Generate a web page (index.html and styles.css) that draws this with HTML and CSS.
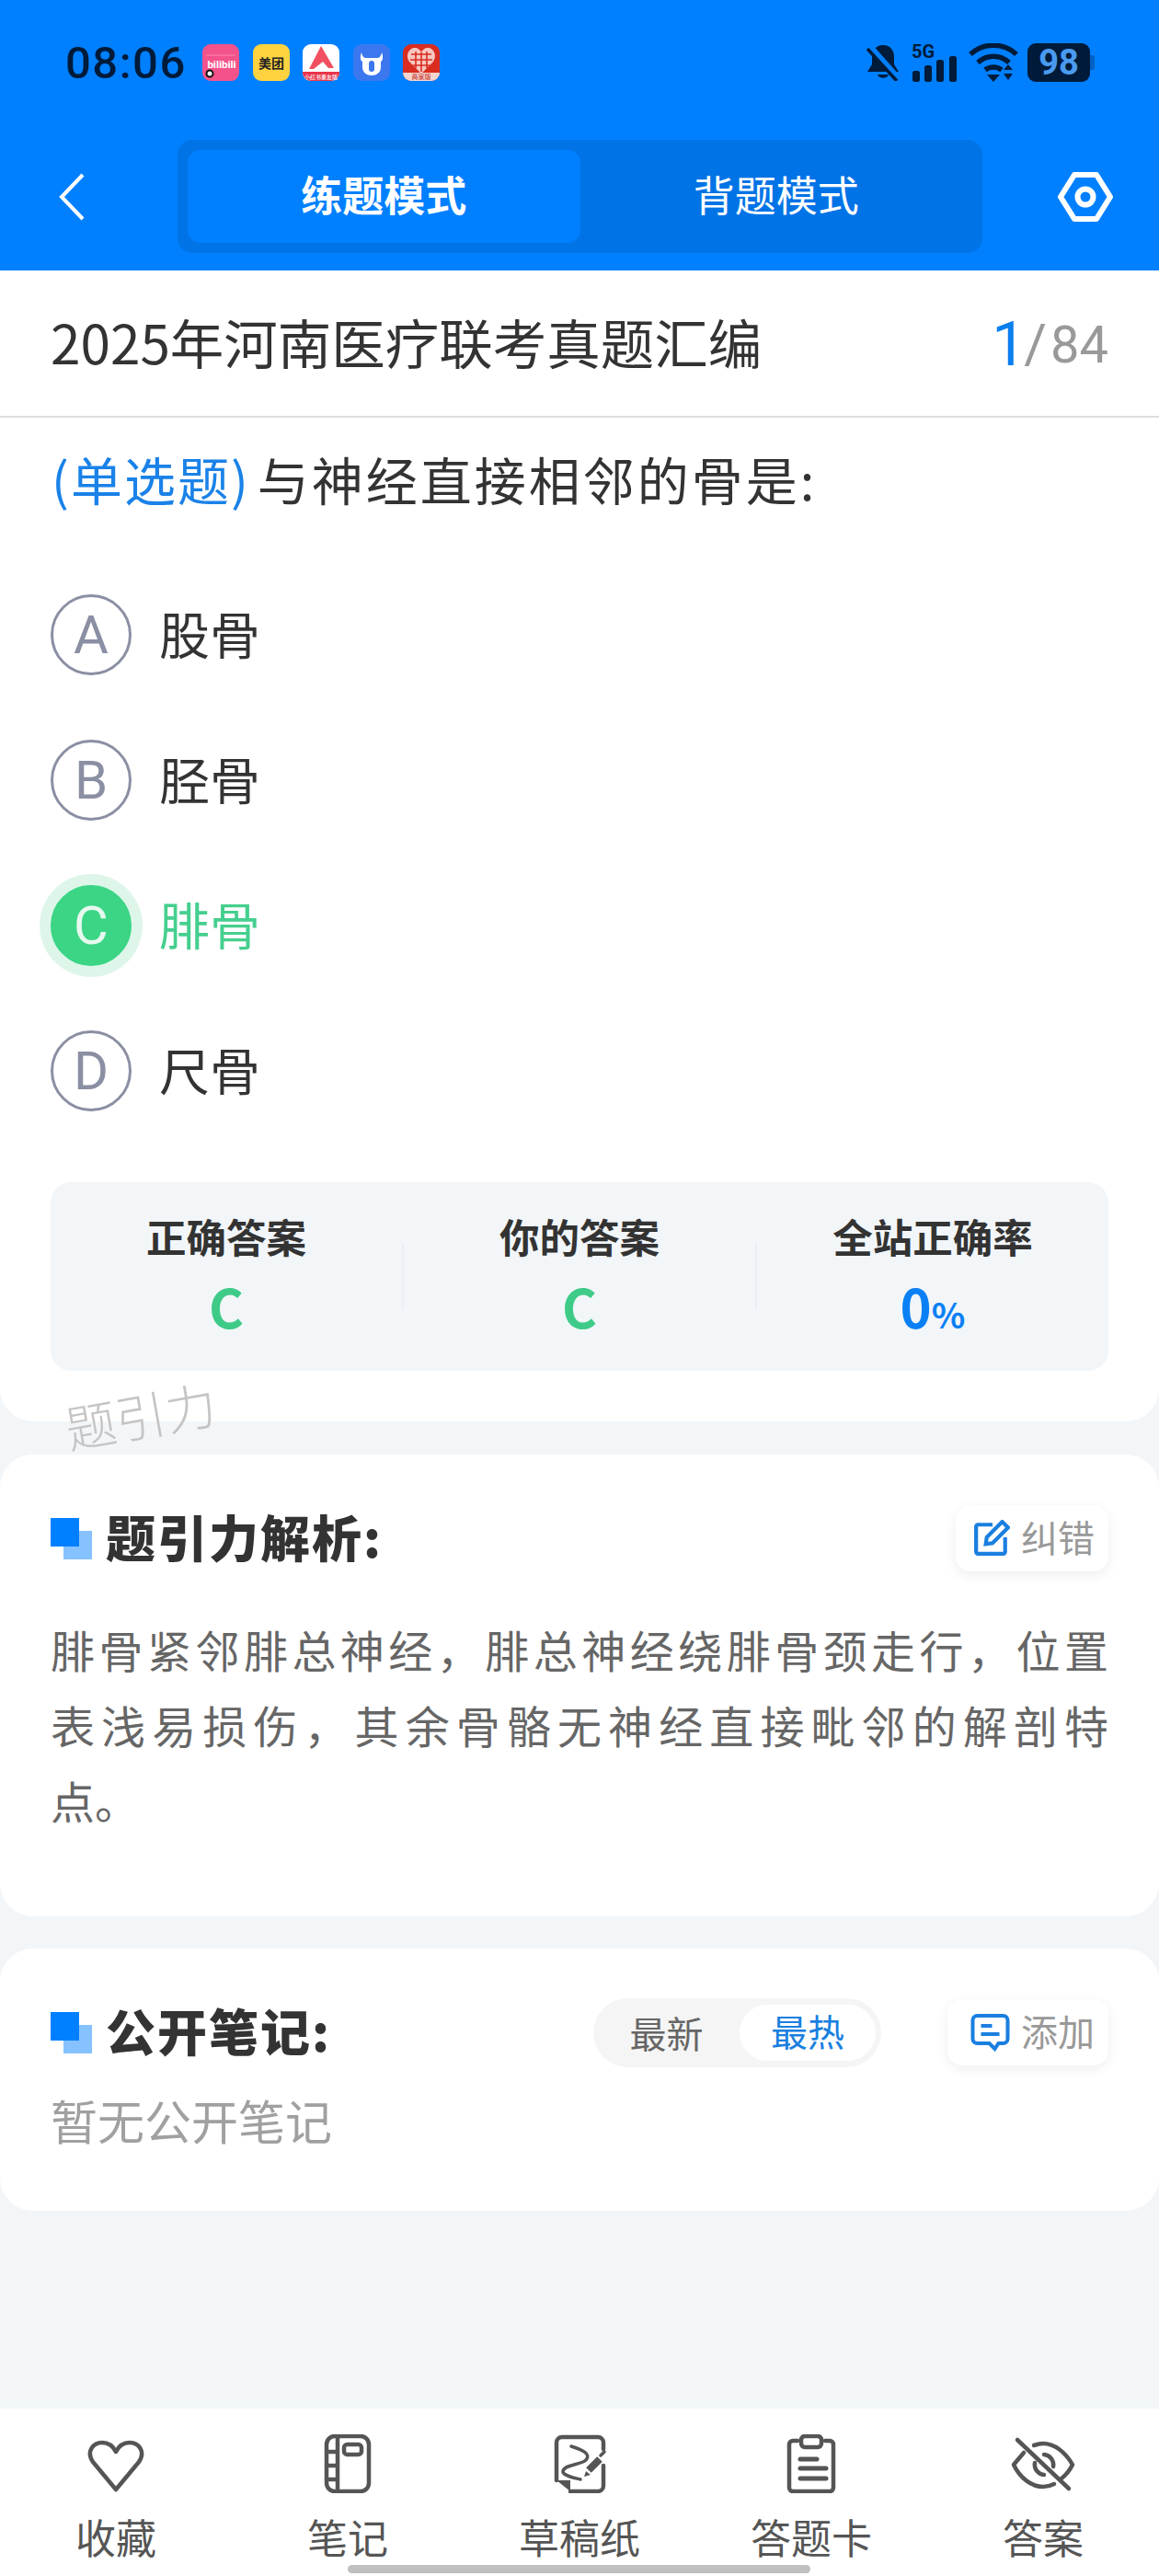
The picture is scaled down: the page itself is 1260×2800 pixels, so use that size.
FILE: index.html
```html
<!DOCTYPE html>
<html lang="zh-CN">
<head>
<meta charset="utf-8">
<title>练题模式</title>
<link rel="stylesheet" href="styles.css">
</head>
<body>
<div class="page">
  <header class="header">
    <div class="status">
      <span class="time">08:06</span>
      <div class="apps">
        <svg class="app" viewBox="0 0 40 40"><rect width="40" height="40" rx="9" fill="#f4528a"/><path d="M4 12 H36" stroke="#f98ab0" stroke-width="1"/><text x="21" y="26" class="app-bili">bilibili</text><circle cx="8" cy="32" r="3.5" fill="#fff" stroke="#111" stroke-width="2"/></svg>
        <svg class="app" viewBox="0 0 40 40"><rect width="40" height="40" rx="9" fill="#ffd23f"/><text x="20" y="26" class="app-mt">美团</text></svg>
        <svg class="app" viewBox="0 0 40 40"><rect width="40" height="40" rx="9" fill="#fff"/><path d="M0 30H40V31a9 9 0 0 1-9 9H9a9 9 0 0 1-9-9Z" fill="#e8344a"/><path d="M20 2 L34 26 H28 L22 19 L12 27 H7 Z" fill="#f0505f"/><text x="20" y="38" class="app-tiny">小红书素友版</text></svg>
        <svg class="app" viewBox="0 0 40 40"><rect width="40" height="40" rx="9" fill="#3b78f0"/><path d="M9 9 C10 14 12 15 14 15 H26 C28 15 30 14 31 9 C33 14 32 18 30 19 V25 C30 37 10 37 10 25 V19 C8 18 7 14 9 9 Z" fill="#fff"/><rect x="17" y="18" width="6" height="12" rx="3" fill="#3b78f0"/></svg>
        <svg class="app" viewBox="0 0 40 40"><rect width="40" height="40" rx="9" fill="#d92d20"/><path d="M20 32 L7 19 C2 12 7 4 13 4 C16 4 19 6 20 9 C21 6 24 4 27 4 C33 4 38 12 33 19 Z" fill="#f7c7c0"/><path d="M20 9V30M9 11H31M8 17H32M11 23H29M14 8V26M26 8V26" stroke="#d92d20" stroke-width="1.6"/><path d="M0 31H40V31a9 9 0 0 1-9 9H9a9 9 0 0 1-9-9Z" fill="#f4d5cf"/><text x="20" y="38" class="app-tiny app-red">商家版</text></svg>
      </div>
      <div class="sys">
        <svg class="ic-bell" viewBox="0 0 38 40"><path d="M19 1 C11 1 7 7 7 14 V22 L2 30 H36 L31 22 V14 C31 7 27 1 19 1 Z" fill="#001b3a"/><path d="M13 33 H25 C24 38 14 38 13 33 Z" fill="#001b3a"/><path d="M4 2 L36 38" stroke="#0080ff" stroke-width="7"/><path d="M2 5 L34 40" stroke="#001b3a" stroke-width="3.5"/></svg>
        <svg class="ic-signal" viewBox="0 -8 50 50"><text x="0" y="16" class="five-g">5G</text><rect x="1" y="30" width="8" height="12" rx="2.5"/><rect x="14" y="24" width="8" height="18" rx="2.5"/><rect x="27" y="18" width="8" height="24" rx="2.5"/><rect x="41" y="14" width="8" height="28" rx="2.5"/></svg>
        <svg class="ic-wifi" viewBox="0 0 54 42"><path d="M2 12 C16 -1 38 -1 52 12" class="wave"/><path d="M10 21 C20 12 34 12 44 21" class="wave"/><path d="M18 29 C23 25 31 25 36 29" class="wave"/><path d="M20 34 H34 L27 42 Z" class="solid"/><path d="M43 23 L48 29 H38 Z M38 33 H48 L43 40 Z" class="solid"/></svg>
        <div class="battery"><span class="batt-body">98</span><span class="batt-nub"></span></div>
      </div>
    </div>
    <nav class="nav">
      <svg class="back" viewBox="0 0 28 52"><path d="M26 2 L3 26 L26 50"/></svg>
      <div class="tabs">
        <div class="tab tab-on">练题模式</div>
        <div class="tab">背题模式</div>
      </div>
      <svg class="gear" viewBox="0 0 60 54"><path d="M18 3 H42 L57 27 L42 51 H18 L3 27 Z"/><circle cx="30" cy="27" r="8.5"/></svg>
    </nav>
  </header>

  <section class="card card-q">
    <div class="q-head">
      <h1 class="q-title">2025年河南医疗联考真题汇编</h1>
      <div class="q-count"><span class="cnt-now">1</span><span class="cnt-sep">/</span><span class="cnt-all">84</span></div>
    </div>
    <p class="q-text"><span class="q-type">(单选题)</span><span class="q-body">与神经直接相邻的骨是:</span></p>
    <ul class="opts">
      <li class="opt"><span class="dot">A</span><span class="opt-txt">股骨</span></li>
      <li class="opt"><span class="dot">B</span><span class="opt-txt">胫骨</span></li>
      <li class="opt opt-on"><span class="dot">C</span><span class="opt-txt">腓骨</span></li>
      <li class="opt"><span class="dot">D</span><span class="opt-txt">尺骨</span></li>
    </ul>
    <div class="stats">
      <div class="stat"><div class="stat-label">正确答案</div><div class="stat-val green">C</div></div>
      <div class="stat-div"></div>
      <div class="stat"><div class="stat-label">你的答案</div><div class="stat-val green">C</div></div>
      <div class="stat-div"></div>
      <div class="stat"><div class="stat-label">全站正确率</div><div class="stat-val blue">0<small>%</small></div></div>
    </div>
    <div class="mark">题引力</div>
  </section>

  <section class="card card-a">
    <div class="sec-head">
      <i class="sec-blk"></i><h2 class="sec-title">题引力解析:</h2>
      <div class="pill-btn">
        <svg class="pill-ic" viewBox="0 0 38 38"><path d="M20 5 H5 A2 2 0 0 0 3 7 V33 A2 2 0 0 0 5 35 H31 A2 2 0 0 0 33 33 V18"/><path d="M13 25 L14 18 L30 2 L36 8 L20 24 Z"/></svg>
        <span class="pill-txt">纠错</span>
      </div>
    </div>
    <div class="para">
      <div class="ln">腓骨紧邻腓总神经，腓总神经绕腓骨颈走行，位置</div>
      <div class="ln">表浅易损伤，其余骨骼无神经直接毗邻的解剖特</div>
      <div class="ln ln-last">点。</div>
    </div>
  </section>

  <section class="card card-n">
    <div class="sec-head">
      <i class="sec-blk"></i><h2 class="sec-title">公开笔记:</h2>
      <div class="seg"><span class="seg-item">最新</span><span class="seg-item seg-on">最热</span></div>
      <div class="pill-btn pill-add">
        <svg class="pill-ic pill-ic-add" viewBox="0 0 44 42"><path d="M8 3 H36 A5 5 0 0 1 41 8 V28 A5 5 0 0 1 36 33 H31 L27 39 L21 33 H8 A5 5 0 0 1 3 28 V8 A5 5 0 0 1 8 3 Z"/><path d="M12 14 H24 M12 23 H32"/></svg>
        <span class="pill-txt">添加</span>
      </div>
    </div>
    <p class="empty">暂无公开笔记</p>
  </section>

  <div class="spacer"></div>

  <footer class="bar">
    <div class="bar-item">
      <svg class="b-ic" width="64" height="64" viewBox="0 0 64 64"><path d="M32 60 L7 30 C-1 18 8 9 17 9 C24 9 29 13 32 19 C35 13 40 9 47 9 C56 9 65 18 57 30 Z"/></svg>
      <span>收藏</span>
    </div>
    <div class="bar-item">
      <svg class="b-ic" width="64" height="64" viewBox="0 0 64 64"><rect x="9" y="2" width="46" height="60" rx="9"/><path d="M21 2 V62 M9 19 H21 M9 34 H21 M9 49 H21"/><rect x="28" y="11" width="19" height="11" rx="3.5"/></svg>
      <span>笔记</span>
    </div>
    <div class="bar-item">
      <svg class="b-ic" width="64" height="64" viewBox="0 0 64 64"><path d="M7 50 V9 A6 6 0 0 1 13 3 H52 A6 6 0 0 1 58 9 V16 M58 34 V56 A6 6 0 0 1 52 62 H22"/><path d="M7 50 H22 V62 Z" class="b-fill"/><path d="M23 13 C35 17 45 21 39 28 C35 33 13 33 14 41 C15 45 25 47 33 49" class="b-thin"/><path d="M42 39 L54 27" class="b-thick"/><path d="M37 46 L44 44 L39 40 Z" class="b-fill"/><path d="M55 23 L59 19" class="b-thin"/></svg>
      <span>草稿纸</span>
    </div>
    <div class="bar-item">
      <svg class="b-ic" width="64" height="64" viewBox="0 0 64 64"><path d="M17 7 H12 A4 4 0 0 0 8 11 V58 A4 4 0 0 0 12 62 H52 A4 4 0 0 0 56 58 V11 A4 4 0 0 0 52 7 H47"/><rect x="21" y="2" width="22" height="12" rx="4"/><path d="M20 27 H38 M20 37 H48 M20 48 H48" class="b-thick2"/></svg>
      <span>答题卡</span>
    </div>
    <div class="bar-item">
      <svg class="b-ic" width="70" height="64" viewBox="0 0 70 64"><path d="M14 20 L3 33 C10 48 23 57 35 57 C39 57 43 56 47 54 M25 12 C28 11 31 10 35 10 C47 10 59 19 67 33 C64 39 60 44 55 48"/><path d="M26 31 A11 11 0 0 0 36 44 M36 22 A11 11 0 0 1 46 35"/><path d="M7 6 L63 59"/></svg>
      <span>答案</span>
    </div>
  </footer>
  <div class="home"></div>
</div>
</body>
</html>
```
FILE: styles.css
```css
* { box-sizing: border-box; margin: 0; padding: 0; }
html, body { background: #f2f6f9; }
body { font-family: "Noto Sans CJK SC", "Noto Sans", sans-serif; color: #333; }
.page { position: relative; width: 1260px; height: 2800px; display: flex; flex-direction: column; overflow: hidden; }

/* header */
.header { height: 294px; background: #0080ff; flex: none; }
.status { height: 136px; padding: 0 70px 0 71px; display: flex; align-items: center; color: #001b3a; }
.time { font-family: "Roboto", sans-serif; font-weight: 500; font-size: 49px; letter-spacing: 1.5px; width: 149px; }
.apps { display: flex; gap: 14.5px; }
.app { width: 40px; height: 40px; display: block; }
.app-bili { font: 700 11.5px "Roboto", sans-serif; fill: #fff; text-anchor: middle; }
.app-mt { font: 700 14px "Noto Sans CJK SC", sans-serif; fill: #222; text-anchor: middle; }
.app-tiny { font: 500 6px "Noto Sans CJK SC", sans-serif; fill: #fff; text-anchor: middle; }
.app-red { fill: #c93a30; font-size: 7px; }
.sys { margin-left: auto; display: flex; align-items: center; }
.ic-bell { width: 38px; height: 40px; margin-right: 12px; }
.ic-signal { width: 50px; height: 50px; margin: -8px 12px 0 0; fill: #001b3a; }
.five-g { font: 700 20px "Roboto", sans-serif; fill: #001b3a; }
.ic-wifi { width: 54px; height: 42px; margin-right: 10px; }
.wave { fill: none; stroke: #001b3a; stroke-width: 5.5; }
.solid { fill: #001b3a; }
.battery { display: flex; align-items: center; }
.batt-body { width: 68px; height: 42px; border-radius: 9px; background: #001b3a; color: #4a9bf0; font: 700 38px/42px "Roboto", sans-serif; text-align: center; }
.batt-nub { width: 5px; height: 16px; background: #0061c4; border-radius: 0 3px 3px 0; }

.nav { height: 155px; display: flex; align-items: center; padding-left: 64px; }
.back { width: 28px; height: 52px; margin-right: 101px; fill: none; stroke: #fff; stroke-width: 4; }
.tabs { width: 875px; height: 123px; padding: 11px; background: #0073e6; border-radius: 16px; display: flex; }
.tab { flex: 1; display: flex; align-items: center; justify-content: center; padding-bottom: 7px; font-size: 45px; color: #fff; border-radius: 14px; }
.tab-on { background: #0080ff; font-weight: 700; }
.gear { width: 60px; height: 54px; margin-left: 82px; fill: none; stroke: #fff; stroke-width: 6; stroke-linejoin: round; }

/* cards */
.card { background: #fff; flex: none; padding: 0 55px; }
.card-q { position: relative; height: 1251px; padding-bottom: 55px; border-radius: 0 0 36px 36px; }
.card-a { margin-top: 36px; height: 502px; padding-top: 55px; border-radius: 36px; }
.card-n { margin-top: 35px; height: 285px; padding-top: 55px; border-radius: 36px; }

.q-head { height: 160px; margin: 0 -55px; padding: 0 55px; display: flex; align-items: center; justify-content: space-between; border-bottom: 2px solid #dedede; }
.q-title { font-size: 58.5px; font-weight: 400; color: #333; margin-bottom: 5px; }
.q-count { display: flex; align-items: baseline; font-family: "Roboto", sans-serif; color: #999; margin-bottom: 3px; }
.cnt-now { font-size: 66px; color: #0a7fef; transform: translateY(3px); }
.cnt-sep { font-size: 60px; margin: 0 4px 0 -2px; }
.cnt-all { font-size: 56px; }

.q-text { font-size: 56px; line-height: 70px; letter-spacing: 3px; margin-top: 31px; padding-left: 1px; color: #333; display: flex; }
.q-type { color: #1a82e8; letter-spacing: 2px; }
.q-body { margin-left: 8px; }

.opts { list-style: none; margin-top: 91px; display: flex; flex-direction: column; gap: 70px; }
.opt { display: flex; align-items: center; gap: 30px; height: 88px; font-size: 55px; color: #333; }
.opt-txt { margin-top: -7px; }
.dot { width: 88px; height: 88px; border-radius: 50%; border: 3px solid #8b8fa3; color: #8b8fa3; display: flex; align-items: center; justify-content: center; font: 400 58px "Roboto", sans-serif; }
.opt-on { color: #45cf8e; }
.opt-on .dot { background: #3bd585; border-color: #3bd585; color: #e6f9ef; box-shadow: 0 0 0 12px #def6ea; }

.stats { margin-top: 77px; height: 205px; border-radius: 22px; background: #f2f6f9; display: flex; align-items: center; }
.stat { flex: 1; height: 100%; padding-top: 28px; text-align: center; }
.stat-label { font-size: 43.5px; font-weight: 700; line-height: 62px; color: #333; }
.stat-val { font-size: 58px; font-weight: 700; line-height: 70px; margin-top: 9px; }
.stat-val small { font-size: 38px; font-weight: 700; }
.green { color: #3ecb88; }
.blue { color: #0a80f5; }
.stat-div { width: 2px; height: 73px; background: #ebeef2; }

.mark { position: absolute; left: 70px; top: 1207px; font-size: 55px; line-height: 72px; font-weight: 300; color: #c4c4c4; transform: rotate(-10deg); }

.sec-head { display: flex; align-items: center; height: 72px; }
.sec-blk { width: 31px; height: 31px; background: #0080ff; box-shadow: 14px 14px 0 #86c2ff; margin: 0 29px 14px 0; flex: none; }
.sec-title { font-size: 54px; font-weight: 900; color: #333; letter-spacing: 2px; margin-bottom: 6px; }
.pill-btn { margin-left: auto; width: 166px; height: 72px; border-radius: 16px; background: #fff; box-shadow: 0 4px 14px rgba(0, 0, 0, .07); display: flex; align-items: center; justify-content: flex-end; padding-right: 15px; font-size: 40px; line-height: 58px; color: #999; gap: 12px; }
.pill-txt { margin-top: -5px; }
.pill-ic { width: 40px; height: 40px; fill: none; stroke: #1a7fe0; stroke-width: 4; }
.pill-ic-add { width: 45px; height: 42px; margin-right: -1px; }
.pill-add { width: 175px; margin-left: 72px; }

.para { margin-top: 43px; font-size: 48px; line-height: 82px; color: #666; }
.ln { text-align: justify; text-align-last: justify; }
.ln-last { text-align-last: left; }

.seg { margin-left: auto; width: 313px; height: 75px; border-radius: 38px; background: #f5f5f5; display: flex; align-items: center; padding-right: 6px; font-size: 40px; line-height: 56px; color: #666; }
.seg-item { flex: 1; text-align: center; }
.seg-on { flex: none; width: 148px; height: 61px; line-height: 56px; border-radius: 31px; background: #fff; color: #1a7fe0; }

.empty { margin-top: 24px; font-size: 51px; line-height: 70px; color: #a0a0a0; }

.spacer { flex: 1; }

.bar { flex: none; height: 182px; background: #fff; display: flex; padding-top: 28px; }
.bar-item { flex: 1; display: flex; flex-direction: column; align-items: center; font-size: 44px; line-height: 58px; color: #555; gap: 18px; }
.b-ic { fill: none; stroke: #555; stroke-width: 4.5; stroke-linejoin: round; stroke-linecap: round; display: block; }
.b-fill { fill: #555; stroke: none; }
.b-thin { stroke-width: 3.5; }
.b-thick { stroke-width: 8; stroke-linecap: butt; }
.b-thick2 { stroke-width: 5; }

.home { position: absolute; left: 378px; top: 2788px; width: 503px; height: 9px; border-radius: 5px; background: #c0c0c0; }
```
